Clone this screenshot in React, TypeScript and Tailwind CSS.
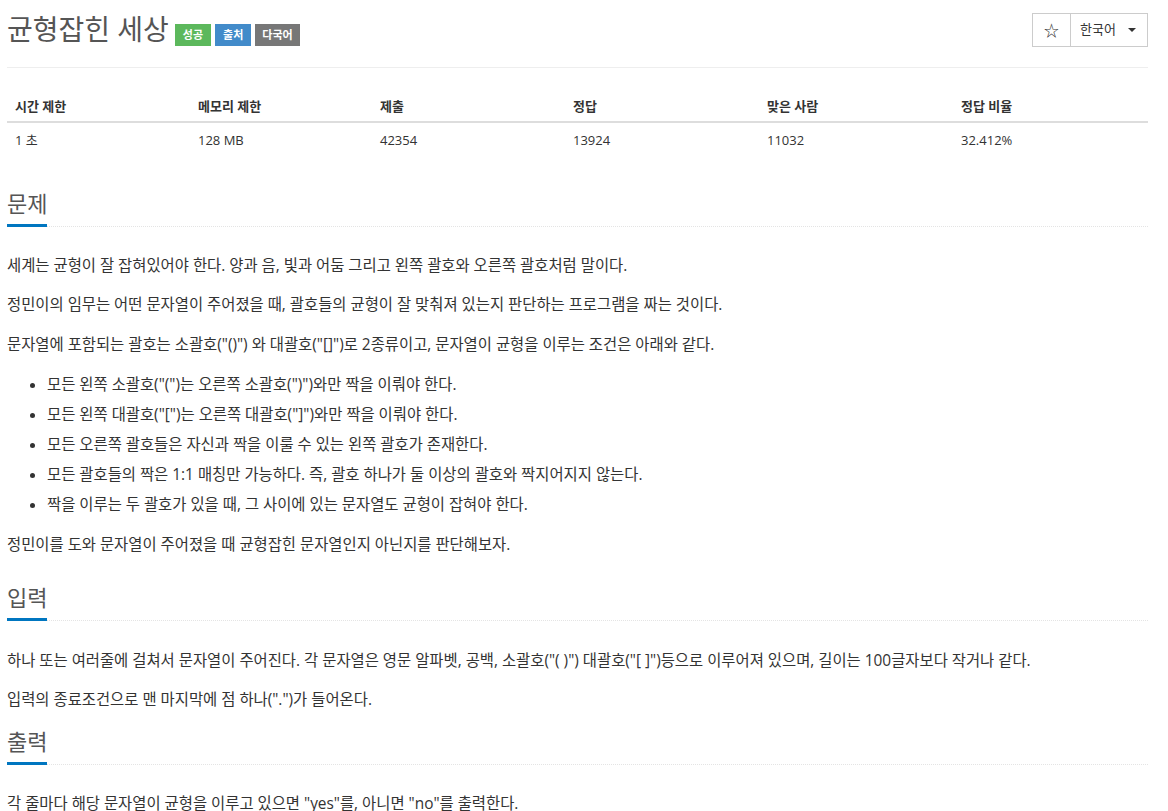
const font = "font-['Open_Sans','Noto_Sans_CJK_KR',sans-serif]";

const stats = [
  { label: "시간 제한", value: "1 초", w: "w-[183px]" },
  { label: "메모리 제한", value: "128 MB", w: "w-[182px]" },
  { label: "제출", value: "42354", w: "w-[193px]" },
  { label: "정답", value: "13924", w: "w-[194px]" },
  { label: "맞은 사람", value: "11032", w: "w-[194px]" },
  { label: "정답 비율", value: "32.412%", w: "" },
];

const rules = [
  '모든 왼쪽 소괄호("(")는 오른쪽 소괄호(")")와만 짝을 이뤄야 한다.',
  '모든 왼쪽 대괄호("[")는 오른쪽 대괄호("]")와만 짝을 이뤄야 한다.',
  "모든 오른쪽 괄호들은 자신과 짝을 이룰 수 있는 왼쪽 괄호가 존재한다.",
  "모든 괄호들의 짝은 1:1 매칭만 가능하다. 즉, 괄호 하나가 둘 이상의 괄호와 짝지어지지 않는다.",
  "짝을 이루는 두 괄호가 있을 때, 그 사이에 있는 문자열도 균형이 잡혀야 한다.",
];

function Headline({ title }: { title: string }) {
  return (
    <div className="border-b border-dotted border-[#e4e4e4]">
      <h2 className="inline-block border-b-[3px] border-[#0076c0] pb-[5px] text-[22px] leading-[32px] text-[#555] -mb-px">
        {title}
      </h2>
    </div>
  );
}

export default function App() {
  return (
    <div className={`${font} bg-white text-[#333] pl-[7px] pr-[20px] min-h-screen`}>
      <div className="flex items-start justify-between pt-[11px]">
        <div className="flex items-end gap-[4px]">
          <h1 className="text-[28px] leading-[36px] text-[#555] mr-[2px]">균형잡힌 세상</h1>
          <span className="mb-[1px] bg-[#5cb85c] text-white text-[11px] font-bold px-[8px] py-[3px] leading-[16px]">성공</span>
          <span className="mb-[1px] bg-[#428bca] text-white text-[11px] font-bold px-[8px] py-[3px] leading-[16px]">출처</span>
          <span className="mb-[1px] bg-[#777] text-white text-[11px] font-bold px-[7px] py-[3px] leading-[16px]">다국어</span>
        </div>
        <div className="mt-[2px] flex border border-[#ccc] h-[34px] text-[13px] text-[#333]">
          <button className="w-[38px] flex items-center justify-center border-r border-[#ccc] text-[15px]">☆</button>
          <button className="w-[76px] flex items-center gap-[12px] pl-[9px]">
            한국어
            <svg width="8" height="4" viewBox="0 0 8 4"><path d="M0 0h8L4 4z" fill="#333" /></svg>
          </button>
        </div>
      </div>
      <div className="border-b border-[#eee] mt-[20px]" />

      <table className="mt-[20px] w-full border-collapse">
        <thead>
          <tr className="border-b-2 border-[#ddd]">
            {stats.map((s) => (
              <th key={s.label} className={`${s.w} text-left text-[13px] font-bold px-[8px] pt-[10px] pb-[6px] leading-[17px]`}>{s.label}</th>
            ))}
          </tr>
        </thead>
        <tbody>
          <tr>
            {stats.map((s) => (
              <td key={s.label} className="px-[8px] py-[8px] text-[13px] leading-[18px] text-[#333]">{s.value}</td>
            ))}
          </tr>
        </tbody>
      </table>

      <section className="mt-[30px]">
        <Headline title="문제" />
        <div className="text-[15.4px] leading-[24px] text-[#333] pt-[27px]">
          <p className="mb-[15px]">세계는 균형이 잘 잡혀있어야 한다. 양과 음, 빛과 어둠 그리고 왼쪽 괄호와 오른쪽 괄호처럼 말이다.</p>
          <p className="mb-[16px]">정민이의 임무는 어떤 문자열이 주어졌을 때, 괄호들의 균형이 잘 맞춰져 있는지 판단하는 프로그램을 짜는 것이다.</p>
          <p className="mb-[13px]">문자열에 포함되는 괄호는 소괄호("()") 와 대괄호("[]")로 2종류이고, 문자열이 균형을 이루는 조건은 아래와 같다.</p>
          <ul className="list-disc pl-[40px] mb-[13px]">
            {rules.map((r) => (
              <li key={r} className="leading-[30px]">{r}</li>
            ))}
          </ul>
          <p>정민이를 도와 문자열이 주어졌을 때 균형잡힌 문자열인지 아닌지를 판단해보자.</p>
        </div>
      </section>

      <section className="mt-[24px]">
        <Headline title="입력" />
        <div className="text-[15.4px] leading-[24px] text-[#333] pt-[28px]">
          <p className="mb-[15px]">하나 또는 여러줄에 걸쳐서 문자열이 주어진다. 각 문자열은 영문 알파벳, 공백, 소괄호("( )") 대괄호("[ ]")등으로 이루어져 있으며, 길이는 100글자보다 작거나 같다.</p>
          <p>입력의 종료조건으로 맨 마지막에 점 하나(".")가 들어온다.</p>
        </div>
      </section>

      <section className="mt-[13px]">
        <Headline title="출력" />
        <div className="text-[15.4px] leading-[24px] text-[#333] pt-[27px]">
          <p>각 줄마다 해당 문자열이 균형을 이루고 있으면 "yes"를, 아니면 "no"를 출력한다.</p>
        </div>
      </section>
    </div>
  );
}
